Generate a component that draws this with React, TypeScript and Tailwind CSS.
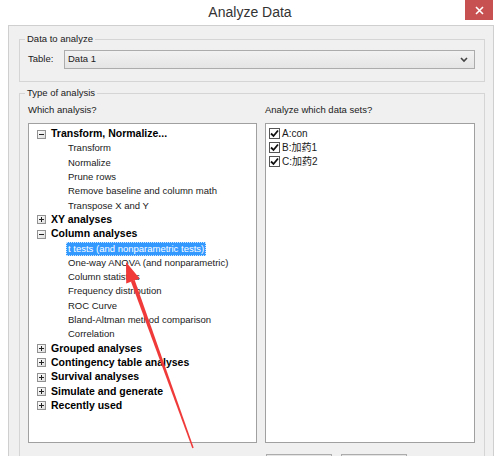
import React from "react";

type Node = { label: string; open?: boolean; children?: string[] };

const tree: Node[] = [
  {
    label: "Transform, Normalize...",
    open: true,
    children: ["Transform", "Normalize", "Prune rows", "Remove baseline and column math", "Transpose X and Y"],
  },
  { label: "XY analyses" },
  {
    label: "Column analyses",
    open: true,
    children: [
      "t tests (and nonparametric tests)",
      "One-way ANOVA (and nonparametric)",
      "Column statistics",
      "Frequency distribution",
      "ROC Curve",
      "Bland-Altman method comparison",
      "Correlation",
    ],
  },
  { label: "Grouped analyses" },
  { label: "Contingency table analyses" },
  { label: "Survival analyses" },
  { label: "Simulate and generate" },
  { label: "Recently used" },
];

const dataSets = ["A:con", "B:加药1", "C:加药2"];

const sel = "t tests (and nonparametric tests)";

function Expander({ open }: { open?: boolean }) {
  return (
    <span className="relative flex h-[9px] w-[9px] shrink-0 items-center justify-center border border-[#919191] bg-gradient-to-br from-white to-[#dcdcdc]">
      <span className="h-px w-[5px] bg-[#222]" />
      {!open && <span className="absolute h-[5px] w-px bg-[#222]" />}
    </span>
  );
}

function Check() {
  return (
    <span className="flex h-[11px] w-[11px] shrink-0 items-center justify-center border border-[#555] bg-white">
      <svg width="9" height="9" viewBox="0 0 9 9">
        <path d="M1 4.5 L3.5 7 L8 1.5" fill="none" stroke="#111" strokeWidth="1.8" />
      </svg>
    </span>
  );
}

function Arrow() {
  return (
    <svg className="pointer-events-none absolute left-0 top-0" width="500" height="456" viewBox="0 0 500 456">
      <polygon points="134.7,280.1 130.9,281.5 192.3,448.2 193.7,447.8" fill="#f03a3a" />
      <polygon points="126,262 139.6,278.4 126.2,283.4" fill="#f03a3a" />
    </svg>
  );
}

export default function App() {
  return (
    <div
      className="relative h-[456px] w-[500px] overflow-hidden bg-white text-[#1a1a1a]"
      style={{ fontFamily: '"Liberation Sans", Arial, "Noto Sans CJK SC", sans-serif' }}
    >
      {/* title bar */}
      <div className="flex h-[25px] items-center justify-center text-[14px] text-[#333]">Analyze Data</div>
      <div className="absolute right-[7px] top-0 flex h-[20px] w-[28px] items-center justify-center bg-[#c75050]">
        <svg width="9" height="9" viewBox="0 0 9 9">
          <path d="M1 1 L8 8 M8 1 L1 8" stroke="white" strokeWidth="1.6" />
        </svg>
      </div>

      {/* client area */}
      <div className="ml-[8px] h-[440px] w-[486px] border border-[#cfcfcf] bg-[#f0f0f0] text-[9.5px]">
        <fieldset className="ml-[10px] mr-[8px] mt-[6px] border border-[#d5d5d5] pb-[12px] pl-[8px] pr-[9px] pt-[4px]">
          <legend className="-ml-[3px] px-[2px] leading-[14px]">Data to analyze</legend>
          <div className="flex items-center">
            <span className="w-[36px]">Table:</span>
            <div className="flex h-[19px] flex-1 items-center justify-between border border-[#acacac] bg-gradient-to-b from-[#f2f2f2] to-[#e5e5e5] pl-[3px] pr-[6px]">
              <span>Data 1</span>
              <svg width="8" height="6" viewBox="0 0 8 6">
                <path d="M1 1 L4 4 L7 1" fill="none" stroke="#444" strokeWidth="1.6" />
              </svg>
            </div>
          </div>
        </fieldset>

        <fieldset className="ml-[10px] mr-[8px] mt-[4px] h-[400px] border border-[#d5d5d5] pl-[8px] pr-[9px] pt-[3px]">
          <legend className="-ml-[3px] px-[2px] leading-[14px]">Type of analysis</legend>
          <div className="flex gap-[8px]">
            <div className="flex w-[229px] flex-col">
              <div className="h-[14px] leading-[14px]">Which analysis?</div>
              <div className="mt-[6px] h-[320px] border border-[#a0a0a0] bg-white pt-[3px]">
                {tree.map((n) => (
                  <div key={n.label}>
                    <div className="flex h-[14.3px] items-center pl-[8px]">
                      <Expander open={n.open} />
                      <span className="ml-[5px] text-[10.5px] font-bold text-black">{n.label}</span>
                    </div>
                    {n.open &&
                      n.children!.map((c) => (
                        <div key={c} className="flex h-[14.3px] items-center pl-[37px]">
                          {c === sel ? (
                            <span className="border border-dotted border-[#cde6ff] bg-[#3399ff] px-[1px] leading-[12px] text-white">
                              {c}
                            </span>
                          ) : (
                            <span className="px-[2px]">{c}</span>
                          )}
                        </div>
                      ))}
                  </div>
                ))}
              </div>
            </div>
            <div className="flex flex-1 flex-col">
              <div className="h-[14px] leading-[14px]">Analyze which data sets?</div>
              <div className="mt-[6px] h-[320px] border border-[#a0a0a0] bg-white pl-[3px] pt-[2px]">
                {dataSets.map((d) => (
                  <div key={d} className="flex h-[14px] items-center gap-[2px] text-[10px]">
                    <Check />
                    <span>{d}</span>
                  </div>
                ))}
              </div>
              <div className="mt-[11px] flex gap-[9px] pl-[1px]">
                <div className="h-[22px] w-[66px] border border-[#acacac] bg-[#e5e5e5]" />
                <div className="h-[22px] w-[66px] border border-[#acacac] bg-[#e5e5e5]" />
              </div>
            </div>
          </div>
        </fieldset>
      </div>

      <Arrow />
    </div>
  );
}
